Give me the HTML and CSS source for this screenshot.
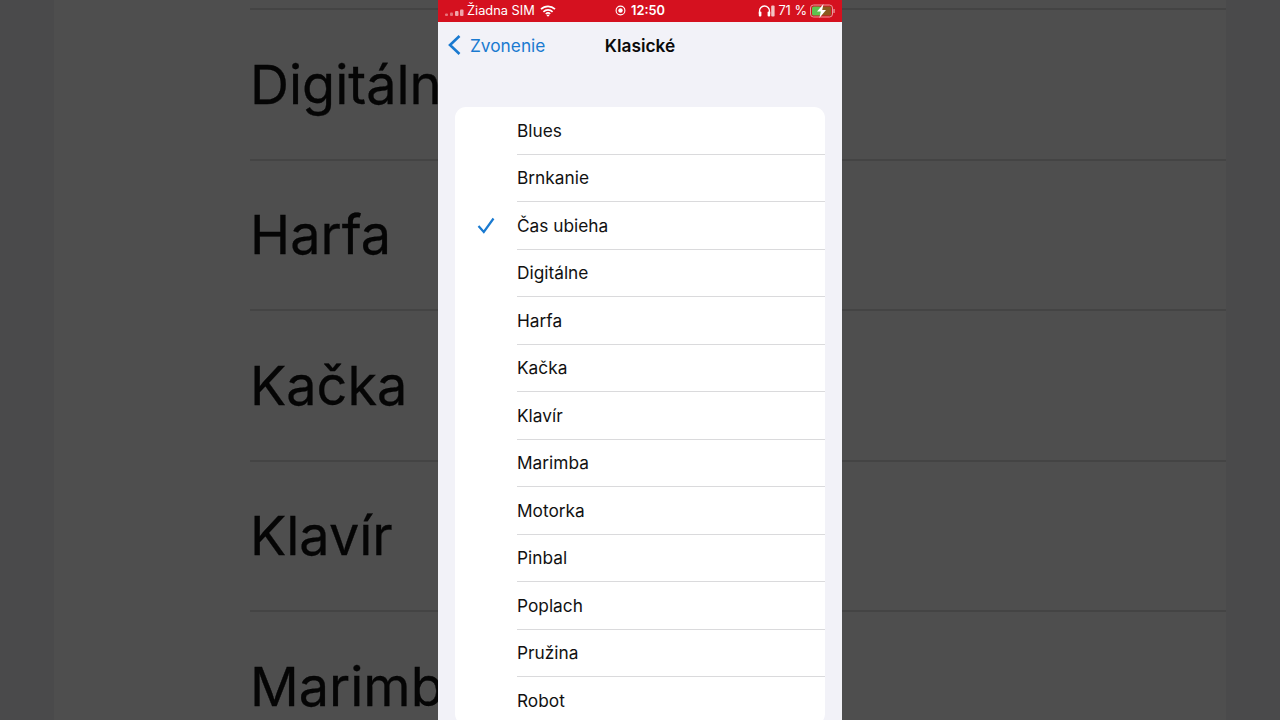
FILE: index.html
```html
<!doctype html>
<html>
<head>
<meta charset="utf-8">
<title>Klasické</title>
<link rel="stylesheet" href="styles.css">
</head>
<body>
<div class="stage">
	<div class="side side-left">
		<div class="blur-row"><span>Digitálne</span></div>
		<div class="blur-row"><span>Harfa</span></div>
		<div class="blur-row"><span>Kačka</span></div>
		<div class="blur-row"><span>Klavír</span></div>
		<div class="blur-row"><span>Marimba</span></div>
	</div>

	<div class="phone">
		<div class="status">
			<div class="status-left">
				<svg class="signal" width="19" height="7" viewBox="0 0 19 7">
					<rect x="0" y="4.5" width="3" height="2.5" rx="1" fill="#e8747c"/>
					<rect x="5" y="3.5" width="3" height="3.5" rx="1" fill="#e8747c"/>
					<rect x="10" y="2" width="3.5" height="5" rx="1" fill="#f0a5aa"/>
					<rect x="15" y="0.5" width="3.5" height="6.5" rx="1" fill="#f0a5aa"/>
				</svg>
				<span>Žiadna SIM</span>
				<svg class="wifi" width="16" height="12" viewBox="0 0 16 12">
					<path d="M1 4.2a10 10 0 0 1 14 0M3.4 6.8a6.6 6.6 0 0 1 9.2 0M5.8 9a3.2 3.2 0 0 1 4.4 0" fill="none" stroke="#fff" stroke-width="1.7"/>
					<path d="M8 11.8 6.5 10.2a2.2 2.2 0 0 1 3 0z" fill="#fff"/>
				</svg>
			</div>
			<div class="status-mid">
				<svg width="11" height="11" viewBox="0 0 11 11">
					<circle cx="5.5" cy="5.5" r="4.4" fill="none" stroke="#fff" stroke-width="1.1"/>
					<circle cx="5.5" cy="5.5" r="2.2" fill="#fff"/>
				</svg>
				<span>12:50</span>
			</div>
			<div class="status-right">
				<svg width="17" height="13" viewBox="0 0 17 13">
					<path d="M1.5 10V7a5 5 0 0 1 10 0v3" fill="none" stroke="#fff" stroke-width="1.3"/>
					<rect x="0.8" y="7.5" width="2.6" height="5" rx="1" fill="#fff"/>
					<rect x="9.6" y="7.5" width="2.6" height="5" rx="1" fill="#fff"/>
					<rect x="13.2" y="1.5" width="3.4" height="11" rx="1" fill="#f3c4c4"/>
				</svg>
				<span>71 %</span>
				<svg width="25" height="14" viewBox="0 0 25 14">
					<rect x="0.5" y="1" width="22" height="12" rx="3" fill="none" stroke="#eb9a9e"/>
					<rect x="2" y="2.5" width="9" height="9" rx="1.6" fill="#5fc44f"/>
					<rect x="11" y="2.5" width="10" height="9" rx="1.2" fill="#8a5a20"/>
					<rect x="23.4" y="5" width="1.3" height="4" rx="0.6" fill="#eb9a9e"/>
					<path d="M13.5 0 7 7.6h3.8L9.4 14l6.6-8h-3.8z" fill="#fff"/>
				</svg>
				<i class="rec-dot"></i>
			</div>
		</div>

		<div class="nav">
			<div class="back">
				<svg width="14" height="22" viewBox="0 0 14 22">
					<path d="M12.5 2 3 11l9.5 9" fill="none" stroke="#1a7ad0" stroke-width="2.6"/>
				</svg>
				<span>Zvonenie</span>
			</div>
			<div class="nav-title">Klasické</div>
		</div>

		<div class="list">
			<div class="item"><span class="tick"></span><div class="name">Blues</div></div>
			<div class="item"><span class="tick"></span><div class="name">Brnkanie</div></div>
			<div class="item"><span class="tick">
				<svg width="18" height="17" viewBox="0 0 18 17">
					<path d="M1.5 9 6.8 15 16.5 1.5" fill="none" stroke="#1a7ad0" stroke-width="2.2"/>
				</svg>
			</span><div class="name">Čas ubieha</div></div>
			<div class="item"><span class="tick"></span><div class="name">Digitálne</div></div>
			<div class="item"><span class="tick"></span><div class="name">Harfa</div></div>
			<div class="item"><span class="tick"></span><div class="name">Kačka</div></div>
			<div class="item"><span class="tick"></span><div class="name">Klavír</div></div>
			<div class="item"><span class="tick"></span><div class="name">Marimba</div></div>
			<div class="item"><span class="tick"></span><div class="name">Motorka</div></div>
			<div class="item"><span class="tick"></span><div class="name">Pinbal</div></div>
			<div class="item"><span class="tick"></span><div class="name">Poplach</div></div>
			<div class="item"><span class="tick"></span><div class="name">Pružina</div></div>
			<div class="item"><span class="tick"></span><div class="name">Robot</div></div>
		</div>
	</div>

	<div class="side side-right">
		<div class="blur-row"></div>
		<div class="blur-row"></div>
		<div class="blur-row"></div>
		<div class="blur-row"></div>
		<div class="blur-row"></div>
	</div>
</div>
</body>
</html>
```
FILE: styles.css
```css
*{padding: 0;margin: 0;box-sizing: border-box;}
html,body{height: 100%;overflow: hidden;}
body{font-family: Inter, "Liberation Sans", sans-serif;background-color: #4a4a4b;}

.stage{
	display: grid;
	grid-template-columns: 438px 404px 438px;
	height: 720px;
	overflow: hidden;}

/* blurred copy of the list either side of the phone */
.side{
	height: 720px;
	overflow: hidden;
	padding-top: 8px;}
.side-left{
	margin-left: 54px;
	padding-left: 196px;
	background-color: #4e4e4e;}
.side-right{
	margin-right: 54px;
	background-color: #4e4e4e;}
.blur-row{
	height: 150.5px;
	border-top: 2px solid #444;
	display: flex;
	align-items: center;
	white-space: nowrap;
	font-size: 54px;
	color: #050505;
	filter: blur(0.6px);}
.blur-row span{margin-top: 0;-webkit-text-stroke: 0.3px #050505;}

.phone{
	height: 720px;
	overflow: hidden;
	background-color: #f2f2f8;}

.status{
	height: 21.5px;
	background-color: #d5111f;
	color: #fff;
	font-size: 12.8px;
	display: grid;
	grid-template-columns: 1fr auto 1fr;
	align-items: center;
	padding: 0 7px;}
.status-left{display: flex;align-items: center;gap: 3px;}
.status-left .signal{margin-top: 4px;}
.status-left .wifi{margin-left: 2px;}
.status-mid{display: flex;align-items: center;gap: 5px;font-weight: 600;}
.status-right{
	display: flex;
	align-items: center;
	justify-content: flex-end;
	gap: 3px;
	position: relative;}
.rec-dot{
	position: absolute;
	right: -3px;
	top: -7px;
	width: 4px;
	height: 4px;
	border-radius: 50%;
	background-color: #f5822a;}

.nav{
	height: 47.5px;
	display: grid;
	grid-template-columns: 1fr auto 1fr;
	align-items: center;
	padding: 0 9px;
	font-size: 17.3px;}
.back{display: flex;align-items: center;gap: 9px;color: #1a7ad0;grid-column: 1;grid-row: 1;}
.nav-title{grid-column: 2;grid-row: 1;font-weight: 600;color: #0a0a0a;}

.list{
	margin: 38px 17px 0;
	background-color: #fff;
	border-radius: 11px;
	overflow: hidden;}
.item{
	height: 47.5px;
	display: flex;
	align-items: stretch;}
.tick{
	width: 62px;
	display: flex;
	align-items: center;
	justify-content: center;}
.name{
	flex: 1;
	display: flex;
	align-items: center;
	font-size: 17.3px;
	color: #111;
	border-bottom: 1px solid #dadadc;}
```
